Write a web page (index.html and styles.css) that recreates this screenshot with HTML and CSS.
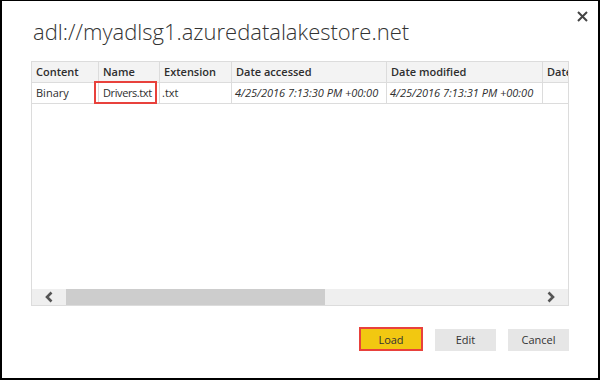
FILE: index.html
```html
<!DOCTYPE html>
<html>
<head>
<meta charset="utf-8">
<link rel="stylesheet" href="styles.css">
</head>
<body>
<div class="frame">
  <button class="close" aria-label="Close">
    <svg width="11" height="11" viewBox="0 0 11 11"><path d="M1 1 L10 10 M10 1 L1 10" stroke="#444" stroke-width="2" fill="none"/></svg>
  </button>
  <div class="head">
    <h1 class="title">adl://myadlsg1.azuredatalakestore.net</h1>
  </div>
  <div class="tablebox">
    <div class="gridarea">
      <div class="grid">
        <div class="cell th">Content</div>
        <div class="cell th">Name</div>
        <div class="cell th">Extension</div>
        <div class="cell th">Date accessed</div>
        <div class="cell th">Date modified</div>
        <div class="cell th">Date created</div>
        <div class="cell">Binary</div>
        <div class="cell hl">Drivers.txt</div>
        <div class="cell ext">.txt</div>
        <div class="cell date">4/25/2016 7:13:30 PM +00:00</div>
        <div class="cell date">4/25/2016 7:13:31 PM +00:00</div>
        <div class="cell date"></div>
      </div>
    </div>
    <div class="hscroll">
      <div class="arrow">
        <svg width="10" height="12" viewBox="0 0 10 12"><path d="M7.5 1.5 L3 6 L7.5 10.5" stroke="#555" stroke-width="2.6" fill="none"/></svg>
      </div>
      <div class="thumb"></div>
      <div class="track"></div>
      <div class="arrow">
        <svg width="10" height="12" viewBox="0 0 10 12"><path d="M2.5 1.5 L7 6 L2.5 10.5" stroke="#555" stroke-width="2.6" fill="none"/></svg>
      </div>
    </div>
  </div>
  <div class="buttons">
    <button class="btn load">Load</button>
    <button class="btn">Edit</button>
    <button class="btn">Cancel</button>
  </div>
</div>
</body>
</html>
```
FILE: styles.css
```css
html, body {
  margin: 0;
  padding: 0;
  background: #fff;
}
.frame {
  position: relative;
  width: 600px;
  height: 380px;
  box-sizing: border-box;
  border: 2px solid #000;
  border-top-width: 1px;
  padding: 0 29px;
  font-family: "Open Sans", "Noto Sans", sans-serif;
  color: #333;
}
.close {
  position: absolute;
  top: 9px;
  right: 9px;
  width: 13px;
  height: 13px;
  padding: 1px;
  border: 0;
  background: none;
  line-height: 0;
}
.head {
  height: 60px;
  box-sizing: border-box;
  padding-top: 15px;
}
.title {
  margin: 0 0 0 2px;
  font-size: 22px;
  font-weight: 300;
  line-height: 30px;
  color: #333;
  white-space: nowrap;
}
.tablebox {
  height: 245px;
  box-sizing: border-box;
  border: 1px solid #dcdcdc;
  display: flex;
  flex-direction: column;
}
.gridarea {
  flex: 1;
  overflow: hidden;
}
.grid {
  display: grid;
  grid-template-columns: 67px 61px 72px 155px 156px 90px;
  grid-auto-rows: 21px;
  width: 601px;
  font-size: 11px;
}
.cell {
  box-sizing: border-box;
  border-right: 1px solid #dcdcdc;
  border-bottom: 1px solid #dcdcdc;
  padding: 0 4px;
  line-height: 20px;
  white-space: nowrap;
  overflow: hidden;
  color: #2e2e2e;
}
.th {
  background: #f3f3f3;
  font-weight: 600;
}
.date {
  font-style: italic;
  padding-left: 3px;
}
.ext {
  padding-left: 2px;
}
.hl {
  position: relative;
  overflow: visible;
  letter-spacing: -0.4px;
}
.hl::after {
  content: "";
  position: absolute;
  left: -5px;
  right: 2px;
  top: -2px;
  bottom: -1px;
  border: 2px solid #e8413c;
}
.hscroll {
  height: 16px;
  display: flex;
  background: #efefef;
}
.arrow {
  width: 34px;
  display: flex;
  align-items: center;
  justify-content: center;
}
.thumb {
  width: 259px;
  background: #cdcdcd;
}
.track {
  flex: 1;
}
.buttons {
  margin-top: 21px;
  display: flex;
  justify-content: flex-end;
  align-items: center;
  gap: 12px;
}
.btn {
  width: 61px;
  height: 22px;
  border: 0;
  padding: 0;
  background: #e6e6e6;
  font-family: "Open Sans", "Noto Sans", sans-serif;
  font-size: 11px;
  color: #333;
}
.load {
  width: 64px;
  height: 24px;
  background: #f2c811;
  border: 2px solid #e8413c;
  margin-bottom: 1px;
}
```
